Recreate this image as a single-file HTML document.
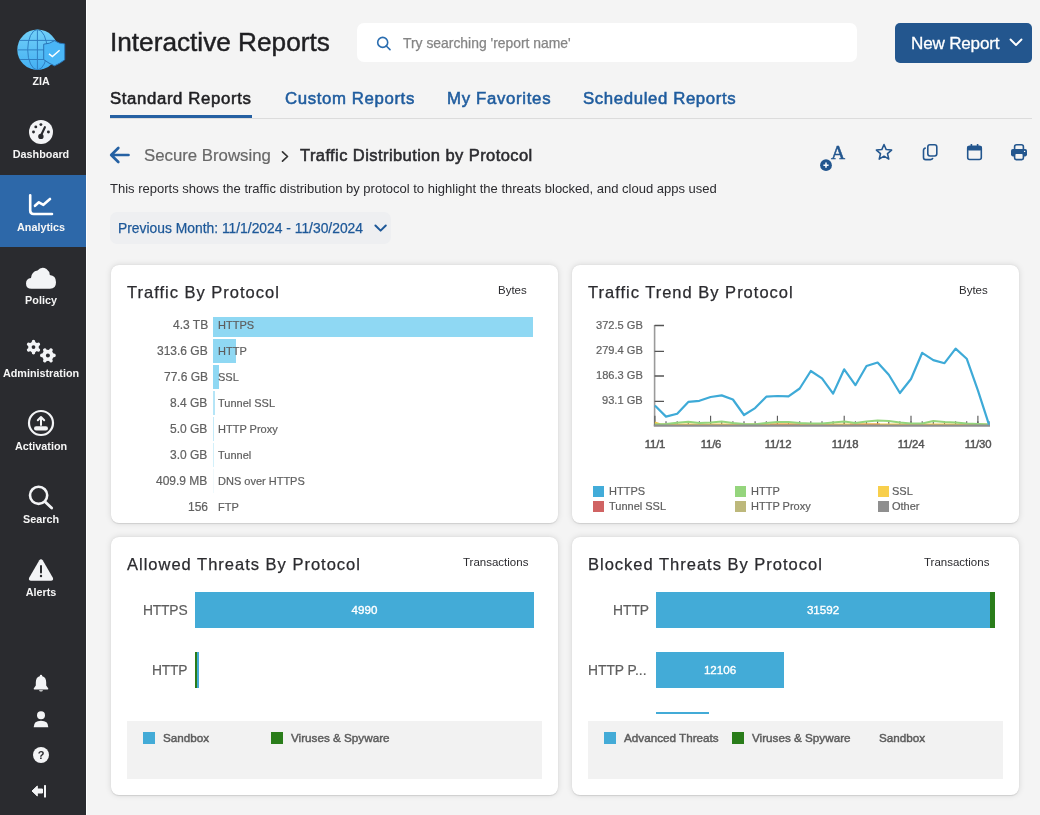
<!DOCTYPE html>
<html><head><meta charset="utf-8">
<style>
*{margin:0;padding:0;box-sizing:border-box}
html,body{width:1040px;height:815px;overflow:hidden;background:#f4f4f4;font-family:"Liberation Sans",sans-serif}
.a{position:absolute}
.t{position:absolute;white-space:nowrap;line-height:1}
.t,.nl,.ct,.unit,.lab,.blab,svg{will-change:transform}
#side{position:absolute;left:0;top:0;width:86px;height:815px;background:#2a2b2f}
#sideedge{position:absolute;left:86px;top:0;width:1px;height:815px;background:#ffffff}
.nl{position:absolute;left:0;width:82px;text-align:center;color:#f6f6f6;font-weight:700;font-size:10.8px;line-height:1;white-space:nowrap}
.card{position:absolute;background:#fff;border-radius:8px;box-shadow:0 0.5px 1px rgba(0,0,0,0.10),0 0 6px rgba(0,0,0,0.13)}
.ct{position:absolute;white-space:nowrap;line-height:1;font-size:16.5px;letter-spacing:1.0px;color:#2b2b2f;-webkit-text-stroke:0.25px #2b2b2f}
.unit{position:absolute;white-space:nowrap;line-height:1;font-size:11.5px;color:#2b2b2f}
.lab{position:absolute;white-space:nowrap;line-height:1;font-size:12px;color:#616161;text-align:right;-webkit-text-stroke:0.2px #616161}
.blab{position:absolute;white-space:nowrap;line-height:1;font-size:11px;color:#5e5e5e;-webkit-text-stroke:0.2px #5e5e5e}
.tab{top:90.6px;font-size:16.8px;letter-spacing:0.62px;color:#1f5c9e;-webkit-text-stroke:0.55px #1f5c9e}
.sb{font-weight:400 !important;-webkit-text-stroke:0.4px currentColor}
.bar{position:absolute;background:#8fd8f3}
.tb{position:absolute;background:#43abd7}
</style></head><body>
<div id="side"></div>
<div id="sideedge"></div>
<div class="a" style="left:0;top:175px;width:86px;height:72px;background:#2d68a9"></div>

<!-- logo -->
<svg class="a" style="left:14px;top:26px" width="56" height="48" viewBox="0 0 56 48">
  <defs><linearGradient id="gg" x1="0" y1="0" x2="0" y2="1"><stop offset="0" stop-color="#72d0f8"/><stop offset="1" stop-color="#43b0f3"/></linearGradient></defs>
  <circle cx="23.5" cy="23.7" r="20.2" fill="url(#gg)"/>
  <clipPath id="gc"><circle cx="23.5" cy="23.7" r="20.2"/></clipPath><g stroke="#2f7fc2" stroke-width="1" fill="none" clip-path="url(#gc)">
    <line x1="3.5" y1="14.4" x2="43.5" y2="14.4"/>
    <line x1="3.3" y1="23.9" x2="43.7" y2="23.9"/>
    <line x1="3.5" y1="33.5" x2="43.5" y2="33.5"/>
    <line x1="23.4" y1="3.5" x2="23.4" y2="44"/>
    <ellipse cx="23.4" cy="23.7" rx="9.7" ry="20.2"/>
  </g>
  <path d="M29.7 18.2 Q35.5 18 40.5 14.7 Q45.5 18 50.7 17.9 L50.7 33.8 Q46 37.5 40.5 39.8 Q35 37.5 29.7 33.6 Z" fill="#4ab6f6" stroke="#2b74b5" stroke-width="1"/>
  <path d="M35 27.9 L38.4 30.6 L45.6 24.3" stroke="#fff" stroke-width="1.5" fill="none"/>
</svg>
<div class="nl" style="top:75.5px;font-size:10.7px">ZIA</div>

<!-- dashboard -->
<svg class="a" style="left:29px;top:120px" width="24" height="24" viewBox="0 0 24 24">
  <circle cx="12" cy="12" r="12" fill="#f3f4f6"/>
  <circle cx="11.9" cy="4.6" r="1.45" fill="#2a2b2f"/>
  <circle cx="6.8" cy="6.9" r="1.45" fill="#2a2b2f"/>
  <circle cx="4.5" cy="12" r="1.45" fill="#2a2b2f"/>
  <circle cx="19.4" cy="12" r="1.45" fill="#2a2b2f"/>
  <path d="M15.9 7.2 L12 15.5" stroke="#2a2b2f" stroke-width="2.1" stroke-linecap="round"/>
  <circle cx="11.9" cy="16.4" r="2.7" fill="#2a2b2f"/>
</svg>
<div class="nl" style="top:148.8px">Dashboard</div>

<!-- analytics -->
<svg class="a" style="left:28px;top:193px" width="27" height="24" viewBox="0 0 27 24">
  <path d="M2.2 2.3 V17.5 Q2.2 21 5.7 21 H24" stroke="#fff" stroke-width="2.6" fill="none" stroke-linecap="round"/>
  <path d="M7 12.8 L10.9 9.3 L15.4 11.8 L22 6" stroke="#fff" stroke-width="2.6" fill="none" stroke-linecap="round" stroke-linejoin="round"/>
</svg>
<div class="nl" style="top:221.5px">Analytics</div>

<!-- policy -->
<svg class="a" style="left:25px;top:266px" width="32" height="24" viewBox="0 0 32 24">
  <path d="M6.5 22.8 Q1 22.8 1 17.5 Q1 12.5 6 12 Q6.5 5.5 12.5 4.5 Q16.5 0 21.5 3 Q24.5 5 24.8 9 Q31 9.5 31 16.3 Q31 22.8 25 22.8 Z" fill="#f3f4f6"/>
</svg>
<div class="nl" style="top:294.5px">Policy</div>

<!-- administration -->
<svg class="a" style="left:20px;top:334px" width="42" height="32" viewBox="0 0 42 32"><circle cx="13.5" cy="13.1" r="5.3" fill="#f3f4f6"/><path d="M13.50 13.10 L13.50 7.40 M13.50 13.10 L8.56 10.25 M13.50 13.10 L8.56 15.95 M13.50 13.10 L13.50 18.80 M13.50 13.10 L18.44 15.95 M13.50 13.10 L18.44 10.25 " stroke="#f3f4f6" stroke-width="3.4" stroke-linecap="round"/><circle cx="13.5" cy="13.1" r="1.9" fill="#2a2b2f"/><circle cx="27.9" cy="21.4" r="5.7" fill="#f3f4f6"/><path d="M27.90 21.40 L34.00 21.40 M27.90 21.40 L30.95 16.12 M27.90 21.40 L24.85 16.12 M27.90 21.40 L21.80 21.40 M27.90 21.40 L24.85 26.68 M27.90 21.40 L30.95 26.68 " stroke="#f3f4f6" stroke-width="3.6" stroke-linecap="round"/><circle cx="27.9" cy="21.4" r="2.0" fill="#2a2b2f"/></svg>
<div class="nl" style="top:368px">Administration</div>

<!-- activation -->
<svg class="a" style="left:27px;top:409px" width="28" height="28" viewBox="0 0 28 28">
  <circle cx="14" cy="14" r="12" stroke="#f3f4f6" stroke-width="2.2" fill="none"/>
  <path d="M14 16 V8.5 M10.8 11.3 L14 8 L17.2 11.3" stroke="#f3f4f6" stroke-width="2" fill="none" stroke-linecap="round" stroke-linejoin="round"/>
  <rect x="7" y="17.3" width="14" height="4.2" rx="2.1" fill="#f3f4f6"/>
</svg>
<div class="nl" style="top:440.8px">Activation</div>

<!-- search -->
<svg class="a" style="left:27px;top:484px" width="28" height="28" viewBox="0 0 28 28">
  <circle cx="11.6" cy="11.3" r="8.6" stroke="#f3f4f6" stroke-width="2.6" fill="none"/>
  <path d="M18 17.7 L24.7 24" stroke="#f3f4f6" stroke-width="2.8" stroke-linecap="round"/>
</svg>
<div class="nl" style="top:513.5px">Search</div>

<!-- alerts -->
<svg class="a" style="left:28px;top:558px" width="26" height="24" viewBox="0 0 26 24">
  <path d="M13 1.2 Q14 1.2 14.7 2.3 L25 20 Q25.6 22.6 23 22.7 L3 22.7 Q0.4 22.6 1 20 L11.3 2.3 Q12 1.2 13 1.2 Z" fill="#f3f4f6"/>
  <path d="M13 8 V14.5" stroke="#2a2b2f" stroke-width="2" stroke-linecap="round"/>
  <circle cx="13" cy="18" r="1.2" fill="#2a2b2f"/>
</svg>
<div class="nl" style="top:586.6px">Alerts</div>

<!-- bottom icons -->
<svg class="a" style="left:33px;top:674px" width="16" height="18" viewBox="0 0 16 18">
  <path d="M8 0.8 Q9.2 0.8 9.3 2.2 Q13.2 3.3 13.2 8.5 L13.2 11.5 L15.3 14.5 Q15.5 15.5 14.5 15.5 L1.5 15.5 Q0.5 15.5 0.7 14.5 L2.8 11.5 L2.8 8.5 Q2.8 3.3 6.7 2.2 Q6.8 0.8 8 0.8 Z" fill="#f3f4f6"/>
  <path d="M6 16.3 H10 Q9.6 17.5 8 17.5 Q6.4 17.5 6 16.3 Z" fill="#f3f4f6"/>
</svg>
<svg class="a" style="left:33px;top:710px" width="16" height="18" viewBox="0 0 16 18">
  <circle cx="8" cy="5.2" r="4" fill="#f3f4f6"/>
  <path d="M0.7 17.2 Q0.7 10.8 8 10.8 Q15.3 10.8 15.3 17.2 Z" fill="#f3f4f6"/>
</svg>
<svg class="a" style="left:33px;top:747px" width="16" height="16" viewBox="0 0 16 16">
  <circle cx="8" cy="8" r="8" fill="#f3f4f6"/>
  <text x="8" y="12" text-anchor="middle" font-family="Liberation Sans" font-weight="700" font-size="11" fill="#2a2b2f">?</text>
</svg>
<svg class="a" style="left:31px;top:784px" width="16" height="14" viewBox="0 0 16 14">
  <path d="M1 7 L6.3 2 V5 H11.5 V9 H6.3 V12 Z" fill="#f3f4f6" stroke="#f3f4f6" stroke-width="1" stroke-linejoin="round"/>
  <rect x="13" y="1" width="2" height="12.5" rx="0.6" fill="#f3f4f6"/>
</svg>

<!-- header -->
<div class="t" style="left:110px;top:29.2px;font-size:26.2px;color:#1f1f22;-webkit-text-stroke:0.45px #1f1f22">Interactive Reports</div>
<div class="a" style="left:357px;top:23px;width:500px;height:39px;background:#fff;border-radius:7px"></div>
<svg class="a" style="left:376px;top:36px" width="16" height="15" viewBox="0 0 16 15">
  <circle cx="6.7" cy="6.4" r="5" stroke="#2a6db0" stroke-width="1.6" fill="none"/>
  <path d="M10.3 10 L14 13.6" stroke="#2a6db0" stroke-width="1.6" stroke-linecap="round"/>
</svg>
<div class="t" style="left:403px;top:37.2px;font-size:13.9px;color:#858585;-webkit-text-stroke:0.25px #858585">Try searching 'report name'</div>
<div class="a" style="left:895px;top:23px;width:137px;height:40px;background:#23568e;border-radius:5px"></div>
<div class="t" style="left:911px;top:35.2px;font-size:17.1px;letter-spacing:-0.2px;color:#fff;-webkit-text-stroke:0.3px #fff">New Report</div>
<svg class="a" style="left:1009px;top:38px" width="14" height="9" viewBox="0 0 14 9">
  <path d="M1.5 1.5 L7 7 L12.5 1.5" stroke="#fff" stroke-width="1.9" fill="none" stroke-linecap="round" stroke-linejoin="round"/>
</svg>

<!-- tabs -->
<div class="a" style="left:110px;top:118px;width:922px;height:1px;background:#dcdcdc"></div>
<div class="a" style="left:110px;top:115px;width:142px;height:3px;background:#2560a2"></div>
<div class="t tab" style="left:110px;color:#1f1f22;-webkit-text-stroke:0.55px #1f1f22">Standard Reports</div>
<div class="t tab" style="left:285px">Custom Reports</div>
<div class="t tab" style="left:447px;letter-spacing:0.68px">My Favorites</div>
<div class="t tab" style="left:583px">Scheduled Reports</div>

<!-- breadcrumb -->
<svg class="a" style="left:109px;top:146px" width="21" height="18" viewBox="0 0 21 18">
  <path d="M19.5 9 H2.5 M9.3 2 L2.2 9 L9.3 16" stroke="#2561a3" stroke-width="2.7" fill="none" stroke-linecap="round" stroke-linejoin="round"/>
</svg>
<div class="t" style="left:144.3px;top:147.7px;font-size:16.8px;color:#686868;-webkit-text-stroke:0.2px #686868">Secure Browsing</div>
<svg class="a" style="left:280px;top:150px" width="11" height="13" viewBox="0 0 11 13">
  <path d="M2.5 1.8 L7.5 6.5 L2.5 11.2" stroke="#333" stroke-width="1.7" fill="none" stroke-linecap="round" stroke-linejoin="round"/>
</svg>
<div class="t" style="left:299.5px;top:147px;font-size:16.5px;letter-spacing:0.42px;color:#2b2b2f;-webkit-text-stroke:0.55px #2b2b2f">Traffic Distribution by Protocol</div>

<!-- action icons -->
<svg class="a" style="left:818px;top:142px" width="30" height="30" viewBox="0 0 30 30">
  <text x="20" y="16.8" text-anchor="middle" font-family="Liberation Serif" font-weight="400" font-size="19.5" fill="#23568e" stroke="#23568e" stroke-width="0.5">A</text>
  <circle cx="8" cy="23.2" r="5.9" fill="#23568e"/>
  <path d="M8 20.6 V25.8 M5.4 23.2 H10.6" stroke="#fff" stroke-width="1.5"/>
</svg>
<svg class="a" style="left:874px;top:142px" width="20" height="20" viewBox="0 0 20 20">
  <path d="M10 2.5 L12.2 7.6 L17.6 8.1 L13.5 11.7 L14.8 17.1 L10 14.2 L5.2 17.1 L6.5 11.7 L2.4 8.1 L7.8 7.6 Z" stroke="#23568e" stroke-width="1.55" fill="none" stroke-linejoin="round"/>
</svg>
<svg class="a" style="left:921px;top:143px" width="18" height="18" viewBox="0 0 18 18">
  <rect x="6.8" y="1.8" width="9" height="11.2" rx="2.2" stroke="#23568e" stroke-width="1.6" fill="none"/>
  <path d="M4.8 5 Q2.5 5.3 2.5 7.5 V14.5 Q2.5 16.6 4.7 16.6 H9.5 Q11.5 16.6 11.8 14.8" stroke="#23568e" stroke-width="1.6" fill="none"/>
</svg>
<svg class="a" style="left:965px;top:143px" width="18" height="18" viewBox="0 0 18 18">
  <rect x="2.7" y="3.3" width="13.6" height="13.2" rx="2" stroke="#23568e" stroke-width="1.6" fill="none"/>
  <rect x="2" y="3" width="15" height="4.6" rx="1.8" fill="#23568e"/>
  <rect x="5.6" y="1" width="1.6" height="3" fill="#23568e"/>
  <rect x="11.8" y="1" width="1.6" height="3" fill="#23568e"/>
</svg>
<svg class="a" style="left:1010px;top:143px" width="18" height="18" viewBox="0 0 18 18">
  <path d="M4.6 6 V3.8 Q4.6 1.8 6.6 1.8 H11.4 Q13.4 1.8 13.4 3.8 V6" stroke="#23568e" stroke-width="1.6" fill="none"/>
  <rect x="1" y="6" width="16" height="7.4" rx="1.8" fill="#23568e"/>
  <rect x="4.6" y="10.2" width="8.8" height="6.4" rx="1.6" stroke="#23568e" stroke-width="1.6" fill="#f4f4f4"/>
  <circle cx="14.6" cy="8.4" r="0.7" fill="#fff"/>
</svg>

<div class="t" style="left:110px;top:182px;font-size:13px;color:#2b2b2f">This reports shows the traffic distribution by protocol to highlight the threats blocked, and cloud apps used</div>

<!-- date pill -->
<div class="a" style="left:110px;top:212px;width:281px;height:32px;background:#eeeff1;border-radius:7px"></div>
<div class="t" style="left:118px;top:222.3px;font-size:13.85px;color:#1d5898;-webkit-text-stroke:0.25px #1d5898">Previous Month: 11/1/2024 - 11/30/2024</div>
<svg class="a" style="left:373px;top:223px" width="15" height="11" viewBox="0 0 15 11">
  <path d="M2.4 2.5 L7.6 7.6 L12.8 2.5" stroke="#1d5898" stroke-width="2" fill="none" stroke-linecap="round" stroke-linejoin="round"/>
</svg>

<!-- CARDS -->
<div class="card" style="left:111px;top:265px;width:447px;height:258px"></div>
<div class="card" style="left:572px;top:265px;width:447px;height:258px"></div>
<div class="card" style="left:111px;top:537px;width:447px;height:258px"></div>
<div class="card" style="left:572px;top:537px;width:447px;height:258px"></div>

<!-- card1 content -->
<div class="ct" style="left:126.8px;top:283.8px">Traffic By Protocol</div>
<div class="unit" style="left:498px;top:285px">Bytes</div>
<div class="bar" style="left:213px;top:317px;width:320px;height:20px;background:#8fd8f3"></div>
<div class="bar" style="left:213px;top:339px;width:23px;height:24px;background:#8fd8f3"></div>
<div class="bar" style="left:213px;top:365px;width:6px;height:24px;background:#8fd8f3"></div>
<div class="bar" style="left:213px;top:391px;width:1.5px;height:24px;background:#b5e5f7"></div>
<div class="bar" style="left:213px;top:417px;width:1px;height:24px;background:#c5ebf9"></div>
<div class="bar" style="left:213px;top:443px;width:1px;height:24px;background:#d3f0fa"></div>
<div class="bar" style="left:213px;top:469px;width:1px;height:24px;background:#f1f9fc"></div>
<div class="lab" style="right:832.3px;top:318.6px">4.3 TB</div>
<div class="blab" style="left:217.6px;top:319.5px">HTTPS</div>
<div class="lab" style="right:832.3px;top:344.6px">313.6 GB</div>
<div class="blab" style="left:217.6px;top:345.5px">HTTP</div>
<div class="lab" style="right:832.3px;top:370.6px">77.6 GB</div>
<div class="blab" style="left:217.6px;top:371.5px">SSL</div>
<div class="lab" style="right:832.3px;top:396.6px">8.4 GB</div>
<div class="blab" style="left:217.6px;top:397.5px">Tunnel SSL</div>
<div class="lab" style="right:832.3px;top:422.6px">5.0 GB</div>
<div class="blab" style="left:217.6px;top:423.5px">HTTP Proxy</div>
<div class="lab" style="right:832.3px;top:448.6px">3.0 GB</div>
<div class="blab" style="left:217.6px;top:449.5px">Tunnel</div>
<div class="lab" style="right:832.3px;top:474.6px">409.9 MB</div>
<div class="blab" style="left:217.6px;top:475.5px">DNS over HTTPS</div>
<div class="lab" style="right:832.3px;top:500.6px">156</div>
<div class="blab" style="left:217.6px;top:501.5px">FTP</div>
<!-- card2 content -->
<div class="ct" style="left:587.8px;top:283.8px">Traffic Trend By Protocol</div>
<div class="unit" style="left:959px;top:285px">Bytes</div>
<div class="lab" style="right:397.20000000000005px;top:319.9px;font-size:11.1px">372.5 GB</div>
<div class="lab" style="right:397.20000000000005px;top:344.8px;font-size:11.1px">279.4 GB</div>
<div class="lab" style="right:397.20000000000005px;top:369.8px;font-size:11.1px">186.3 GB</div>
<div class="lab" style="right:397.20000000000005px;top:395.1px;font-size:11.1px">93.1 GB</div>
<div class="t" style="left:615px;width:80px;text-align:center;top:438.7px;font-size:11.3px;font-weight:400;letter-spacing:-0.2px;color:#555;-webkit-text-stroke:0.45px #555">11/1</div>
<div class="t" style="left:671px;width:80px;text-align:center;top:438.7px;font-size:11.3px;font-weight:400;letter-spacing:-0.2px;color:#555;-webkit-text-stroke:0.45px #555">11/6</div>
<div class="t" style="left:737.5px;width:80px;text-align:center;top:438.7px;font-size:11.3px;font-weight:400;letter-spacing:-0.2px;color:#555;-webkit-text-stroke:0.45px #555">11/12</div>
<div class="t" style="left:804.5px;width:80px;text-align:center;top:438.7px;font-size:11.3px;font-weight:400;letter-spacing:-0.2px;color:#555;-webkit-text-stroke:0.45px #555">11/18</div>
<div class="t" style="left:871px;width:80px;text-align:center;top:438.7px;font-size:11.3px;font-weight:400;letter-spacing:-0.2px;color:#555;-webkit-text-stroke:0.45px #555">11/24</div>
<div class="t" style="left:938px;width:80px;text-align:center;top:438.7px;font-size:11.3px;font-weight:400;letter-spacing:-0.2px;color:#555;-webkit-text-stroke:0.45px #555">11/30</div>
<svg class="a" style="left:0;top:0" width="1040" height="815" viewBox="0 0 1040 815">
  <path d="M654.6 325 V426" stroke="#9a9a9a" stroke-width="1.6"/>
  <path d="M654.6 325.5 H664 M654.6 351.3 H664 M654.6 376 H664 M654.6 401.4 H664" stroke="#555" stroke-width="1.3"/>
  <path d="M666.0 421.3V425 M677.2 421.3V425 M688.3 421.3V425 M699.4 421.3V425 M710.6 421.3V425 M721.7 421.3V425 M732.9 421.3V425 M744.0 421.3V425 M755.1 421.3V425 M766.3 421.3V425 M777.4 421.3V425 M788.5 421.3V425 M799.7 421.3V425 M810.8 421.3V425 M822.0 421.3V425 M833.1 421.3V425 M844.2 421.3V425 M855.4 421.3V425 M866.5 421.3V425 M877.6 421.3V425 M888.8 421.3V425 M899.9 421.3V425 M911.0 421.3V425 M922.2 421.3V425 M933.3 421.3V425 M944.5 421.3V425 M955.6 421.3V425 M966.7 421.3V425 M977.9 421.3V425 M989.0 421.3V425 " stroke="#555" stroke-width="1.1"/>
  <path d="M710.6 415.8V425 M777.4 415.8V425 M844.2 415.8V425 M911.0 415.8V425 M977.9 415.8V425 M654.9 415.8V425" stroke="#555" stroke-width="1.1"/>
  <polyline points="654.9,422.5 660,424.3 989,424.6" stroke="#f5c84a" stroke-width="2" fill="none"/>
  <path d="M770 424.2 H800 M850 424.2 H880" stroke="#eea34a" stroke-width="1.4" fill="none"/>
  <polyline points="654.9,424.4 666.0,424.0 677.2,422.8 688.3,421.8 699.4,423.0 710.6,422.5 721.7,421.5 732.9,423.0 744.0,424.0 755.1,424.3 766.3,423.0 777.4,422.0 788.5,422.0 799.7,423.0 810.8,423.5 822.0,423.4 833.1,422.5 844.2,421.5 855.4,423.0 866.5,421.5 877.6,420.5 888.8,421.0 899.9,422.5 911.0,423.5 922.2,423.5 933.3,421.0 944.5,422.0 955.6,422.5 966.7,423.5 977.9,424.0 989.0,424.5" stroke="#94d57c" stroke-width="2" fill="none" stroke-linejoin="round"/>
  <path d="M653.8 425.6 H990" stroke="#8e8e8e" stroke-width="2.2"/>
  <polyline points="654.9,405.5 666.0,416.6 677.2,413.7 688.3,401.9 699.4,400.8 710.6,397.0 721.7,395.4 732.9,399.5 744.0,415.0 755.1,408.1 766.3,396.7 777.4,396.0 788.5,396.4 799.7,388.5 810.8,371.0 822.0,378.4 833.1,393.6 844.2,369.3 855.4,385.2 866.5,366.0 877.6,362.5 888.8,374.8 899.9,393.0 911.0,379.0 922.2,352.8 933.3,360.1 944.5,363.2 955.6,348.6 966.7,358.7 977.9,390.3 989.0,424.6" stroke="#3eaad7" stroke-width="2.2" fill="none" stroke-linejoin="round"/>
</svg>
<div class="a" style="left:593px;top:486px;width:11px;height:11px;background:#42acd9"></div>
<div class="blab" style="left:609.3px;top:486.4px">HTTPS</div>
<div class="a" style="left:734.5px;top:486px;width:11px;height:11px;background:#95d57d"></div>
<div class="blab" style="left:751px;top:486.4px">HTTP</div>
<div class="a" style="left:877.5px;top:486px;width:11px;height:11px;background:#f8cf4c"></div>
<div class="blab" style="left:892.3px;top:486.4px">SSL</div>
<div class="a" style="left:593px;top:501px;width:11px;height:11px;background:#d06363"></div>
<div class="blab" style="left:609.3px;top:501.4px">Tunnel SSL</div>
<div class="a" style="left:734.5px;top:501px;width:11px;height:11px;background:#bdb87b"></div>
<div class="blab" style="left:751px;top:501.4px">HTTP Proxy</div>
<div class="a" style="left:877.5px;top:501px;width:11px;height:11px;background:#8f8f8f"></div>
<div class="blab" style="left:892.3px;top:501.4px">Other</div>
<!-- card3 content -->
<div class="ct" style="left:126.8px;top:556px">Allowed Threats By Protocol</div>
<div class="unit" style="left:462.5px;top:557.3px">Transactions</div>
<div class="tb" style="left:195px;top:592px;width:339px;height:36px"></div>
<div class="t" style="left:195px;width:339px;text-align:center;top:604.4px;font-size:11.6px;color:#fff;-webkit-text-stroke:0.35px #fff">4990</div>
<div class="a" style="left:195px;top:652px;width:2px;height:36px;background:#2a7d1a"></div>
<div class="a" style="left:197px;top:652px;width:2px;height:36px;background:#43abd7"></div>
<div class="lab" style="right:852.7px;letter-spacing:-0.15px;top:603.5px;font-size:13.8px;color:#5e5e5e">HTTPS</div>
<div class="lab" style="right:852.7px;letter-spacing:-0.15px;top:663.5px;font-size:13.8px;color:#5e5e5e">HTTP</div>
<div class="a" style="left:127px;top:721px;width:415px;height:58px;background:#f2f2f2"></div>
<div class="a" style="left:143px;top:732px;width:12px;height:12px;background:#43abd7"></div>
<div class="blab" style="left:163px;top:731.8px;font-size:11.7px;color:#5c5c5c;-webkit-text-stroke:0.45px #5c5c5c">Sandbox</div>
<div class="a" style="left:271px;top:732px;width:12px;height:12px;background:#2a7d1a"></div>
<div class="blab" style="left:291px;top:731.8px;font-size:11.7px;color:#5c5c5c;-webkit-text-stroke:0.45px #5c5c5c">Viruses &amp; Spyware</div>
<!-- card4 content -->
<div class="ct" style="left:587.8px;top:556px">Blocked Threats By Protocol</div>
<div class="unit" style="left:923.5px;top:557.3px">Transactions</div>
<div class="tb" style="left:656px;top:592px;width:334px;height:36px"></div>
<div class="a" style="left:990px;top:592px;width:5px;height:36px;background:#2a7d1a"></div>
<div class="t" style="left:656px;width:334px;text-align:center;top:604.4px;font-size:11.6px;color:#fff;-webkit-text-stroke:0.35px #fff">31592</div>
<div class="tb" style="left:656px;top:652px;width:128px;height:36px"></div>
<div class="t" style="left:656px;width:128px;text-align:center;top:664.4px;font-size:11.6px;color:#fff;-webkit-text-stroke:0.35px #fff">12106</div>
<div class="tb" style="left:656px;top:712px;width:53px;height:2px"></div>
<div class="lab" style="right:391.3px;top:604.2px;font-size:13.8px;color:#5e5e5e">HTTP</div>
<div class="lab" style="left:587.6px;top:664.2px;font-size:13.8px;color:#5e5e5e;text-align:left">HTTP P...</div>
<div class="a" style="left:588px;top:721px;width:415px;height:58px;background:#f2f2f2"></div>
<div class="a" style="left:604px;top:732px;width:12px;height:12px;background:#43abd7"></div>
<div class="blab" style="left:624px;top:731.8px;font-size:11.7px;color:#5c5c5c;-webkit-text-stroke:0.45px #5c5c5c">Advanced Threats</div>
<div class="a" style="left:732px;top:732px;width:12px;height:12px;background:#2a7d1a"></div>
<div class="blab" style="left:752px;top:731.8px;font-size:11.7px;color:#5c5c5c;-webkit-text-stroke:0.45px #5c5c5c">Viruses &amp; Spyware</div>
<div class="blab" style="left:879px;top:731.8px;font-size:11.7px;color:#5c5c5c;-webkit-text-stroke:0.45px #5c5c5c">Sandbox</div>
</body></html>
